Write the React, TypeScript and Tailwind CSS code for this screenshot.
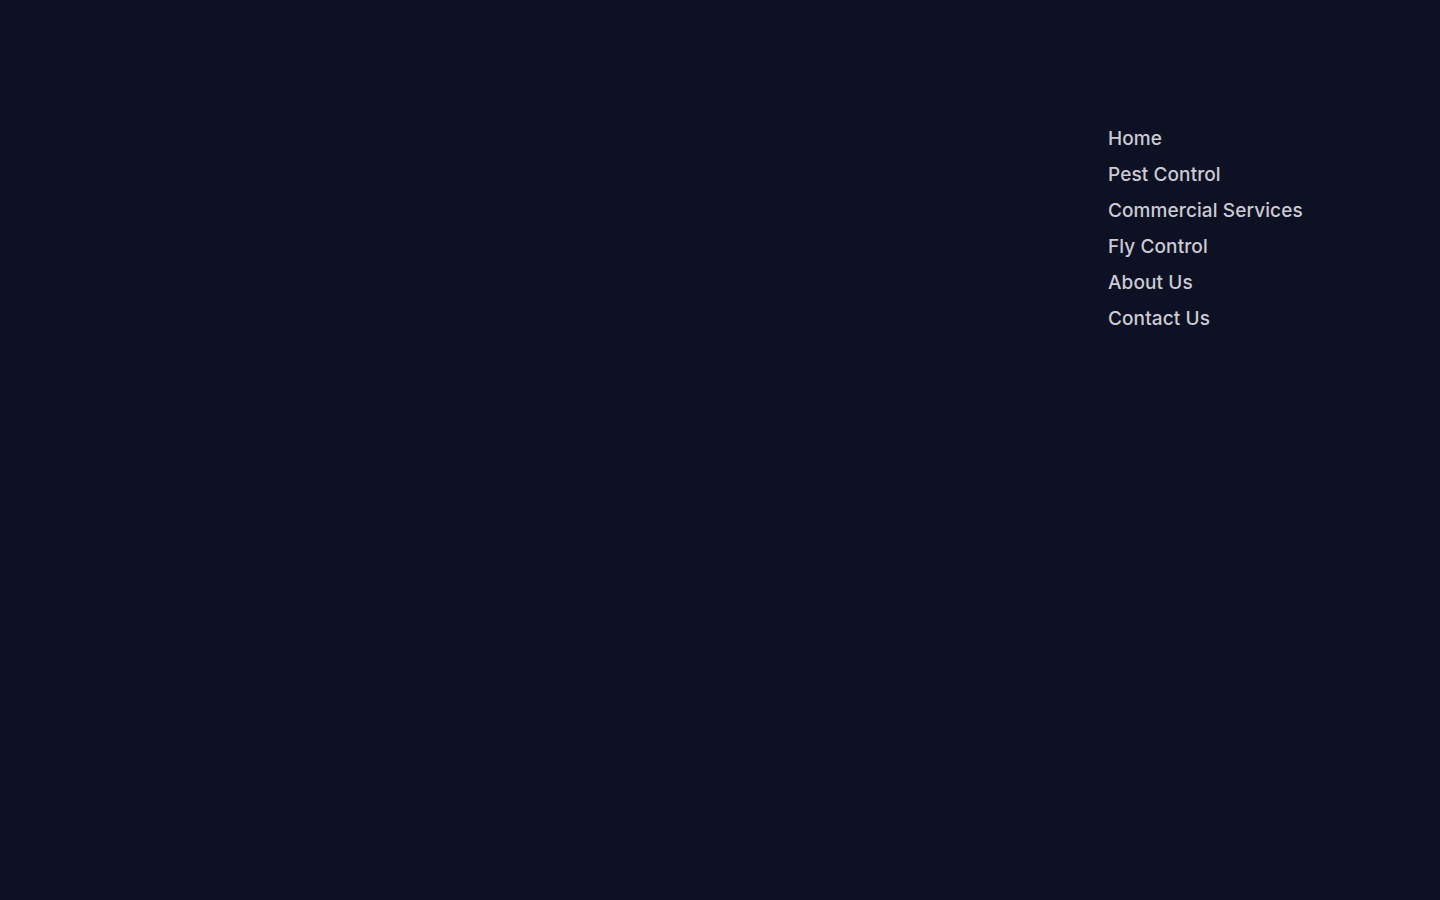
import React from "react";

const items = ["Home", "Pest Control", "Commercial Services", "Fly Control", "About Us", "Contact Us"];

export default function App() {
  return (
    <div className="min-h-screen w-full bg-[#0e1024] flex justify-start">
      <nav className="ml-[1108px] mt-[127px]">
        <ul className="flex flex-col gap-[12px]">
          {items.map((t) => (
            <li key={t}>
              <a className="block text-[19px] leading-[24px] font-medium tracking-[0.1px] text-[#cbcbd3] font-['Inter',sans-serif]" href="#">
                {t}
              </a>
            </li>
          ))}
        </ul>
      </nav>
    </div>
  );
}
